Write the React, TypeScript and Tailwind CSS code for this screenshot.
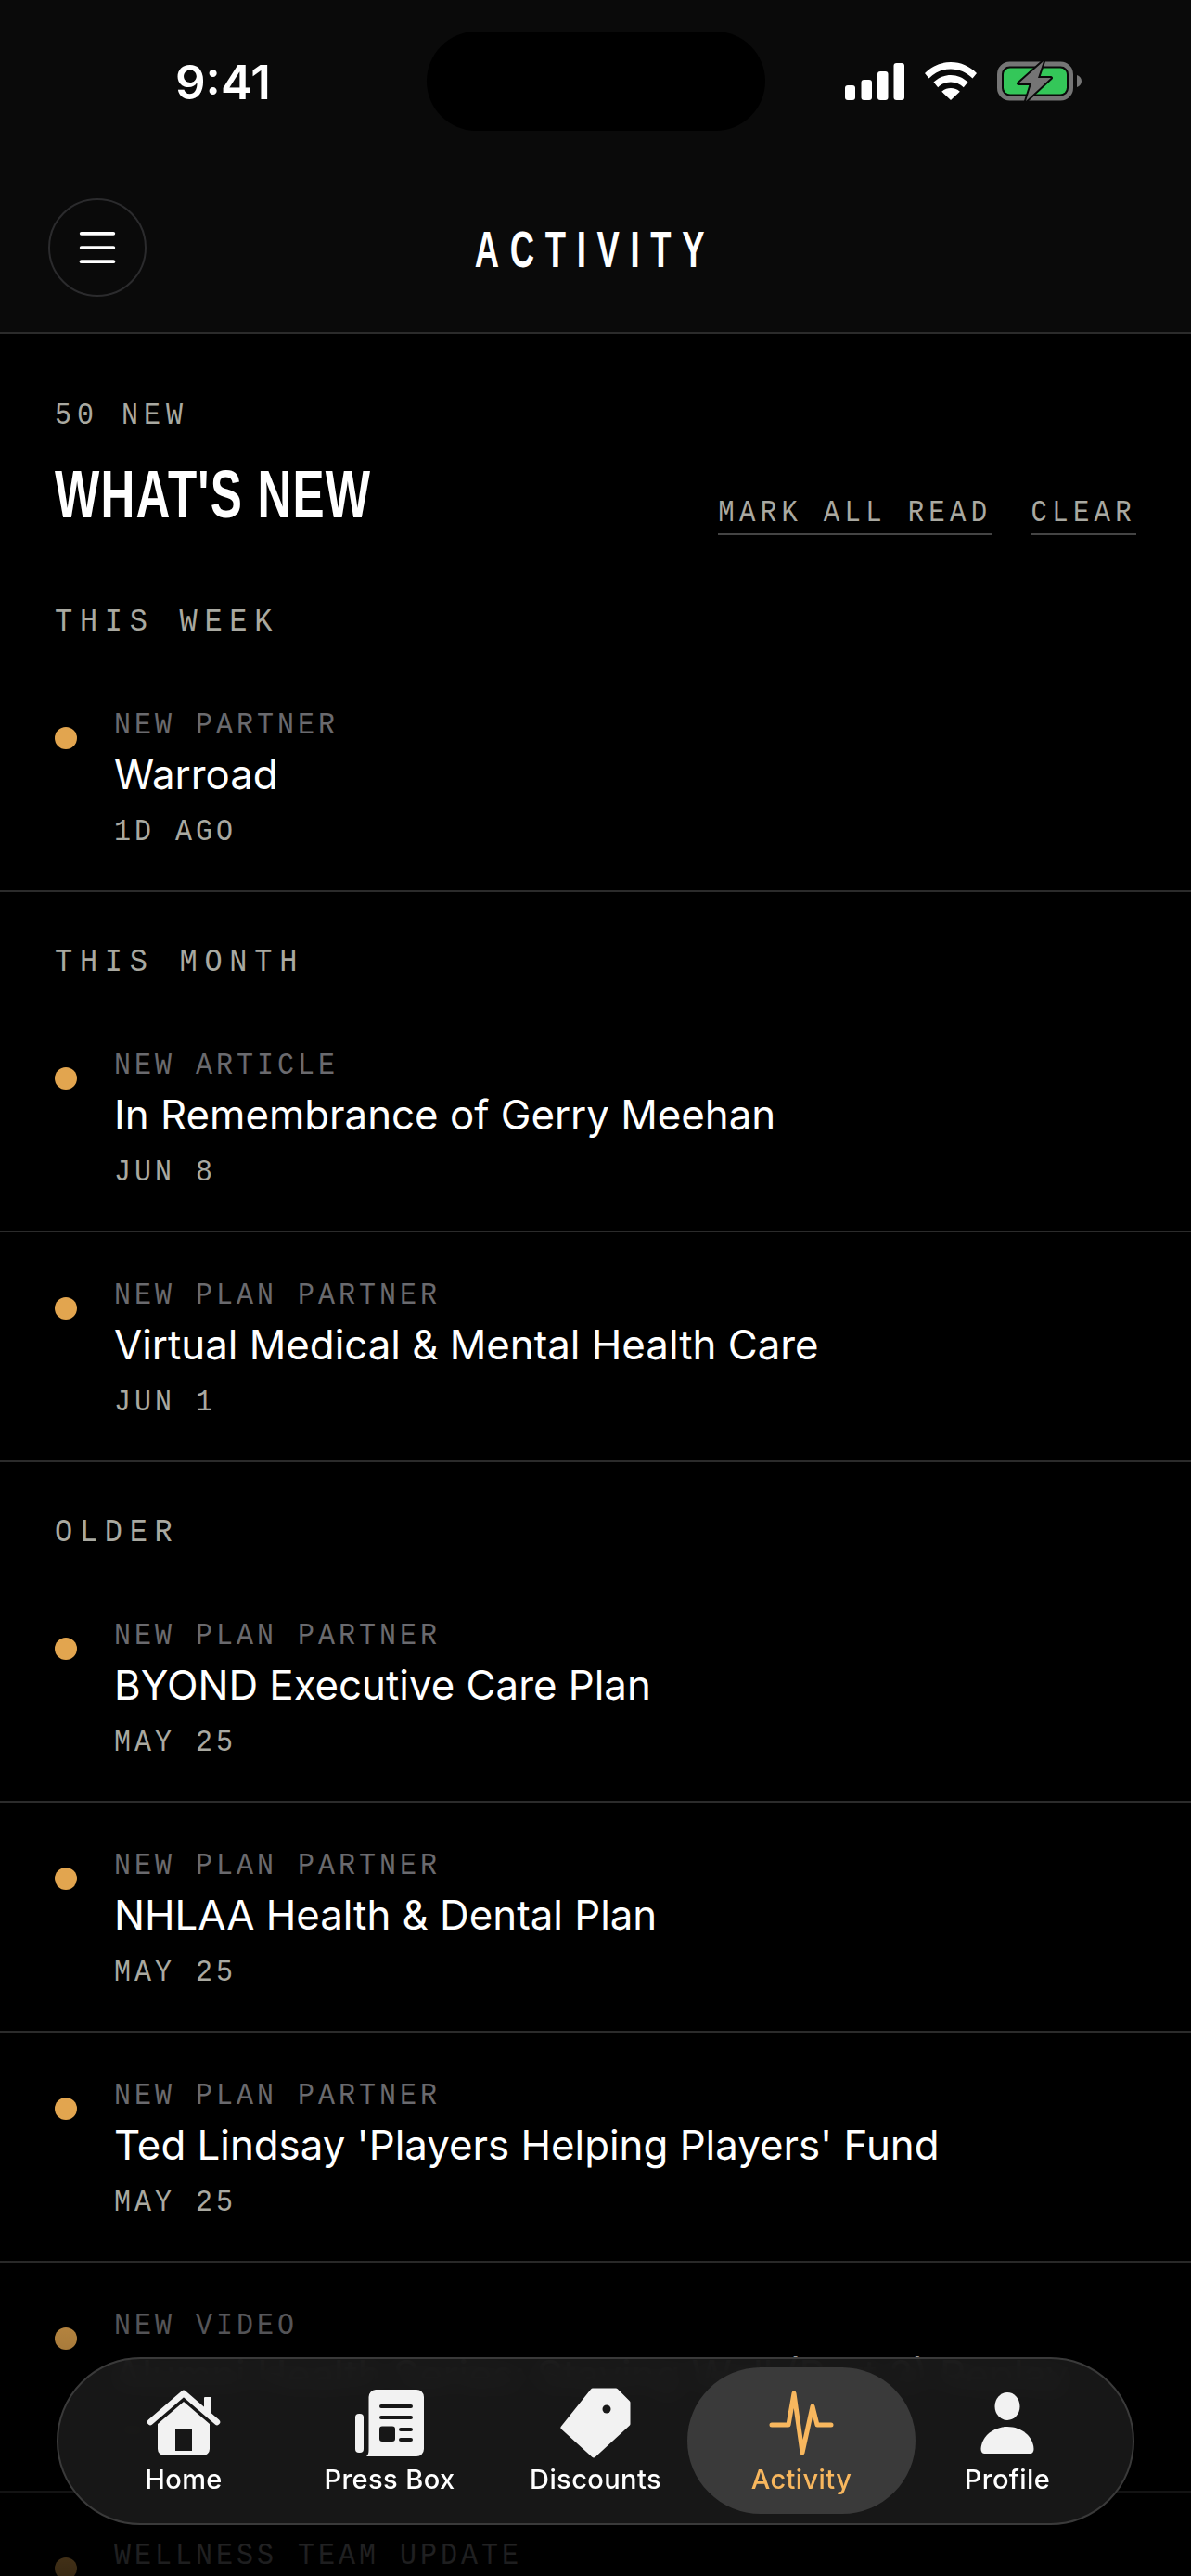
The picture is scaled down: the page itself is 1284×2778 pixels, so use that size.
import { Menu } from "lucide-react";

const mono = "font-['Liberation_Mono',monospace]";
const inter = "font-['Inter',sans-serif]";
const condensed = "font-['Liberation_Sans',sans-serif]";

type Item = { label: string; title?: string; meta?: string };

const sections: { name: string; items: Item[] }[] = [
  {
    name: "THIS WEEK",
    items: [{ label: "NEW PARTNER", title: "Warroad", meta: "1D AGO" }],
  },
  {
    name: "THIS MONTH",
    items: [
      { label: "NEW ARTICLE", title: "In Remembrance of Gerry Meehan", meta: "JUN 8" },
      { label: "NEW PLAN PARTNER", title: "Virtual Medical & Mental Health Care", meta: "JUN 1" },
    ],
  },
  {
    name: "OLDER",
    items: [
      { label: "NEW PLAN PARTNER", title: "BYOND Executive Care Plan", meta: "MAY 25" },
      { label: "NEW PLAN PARTNER", title: "NHLAA Health & Dental Plan", meta: "MAY 25" },
      { label: "NEW PLAN PARTNER", title: "Ted Lindsay 'Players Helping Players' Fund", meta: "MAY 25" },
      { label: "NEW VIDEO", title: "Alumni Health Series: Staying Well (Part 2) Replay", meta: "MAY 22" },
      { label: "WELLNESS TEAM UPDATE" },
    ],
  },
];

function StatusIcons() {
  return (
    <div className="flex items-center gap-[22px]">
      <svg width="64" height="40" viewBox="0 0 64 40" fill="#fff">
        <rect x="0" y="24" width="11" height="16" rx="3" />
        <rect x="17.5" y="18" width="11.5" height="22" rx="3" />
        <rect x="35" y="9" width="11.5" height="31" rx="3" />
        <rect x="52.5" y="0" width="11.5" height="40" rx="3" />
      </svg>
      <svg width="56" height="41" viewBox="0 0 56 41" fill="#fff">
        <path d="M28 0C17 0 7.5 4.5 0 12l4.5 5.5C11 11 19 7.5 28 7.5S45 11 51.5 17.5L56 12C48.500 4.500 39 0 28 0Z" />
        <path d="M28 14c-7 0-13.300 2.800-18.500 7.600l4.700 5.600C18 23.700 22.800 21.500 28 21.500s10 2.200 13.800 5.700l4.700-5.600C41.300 16.800 35 14 28 14Z" />
        <path d="M28 28c-3.800 0-7.200 1.300-9.800 3.700L28 41l9.800-9.300C35.200 29.300 31.800 28 28 28Z" />
      </svg>
      <svg width="91" height="43" viewBox="0 0 91 43">
        <rect x="2.500" y="3" width="77" height="37" rx="11" fill="none" stroke="#757575" strokeWidth="5" />
        <rect x="7" y="7.500" width="68" height="28" rx="7" fill="#34c759" />
        <path d="M86 15c3 1 5 3.500 5 6.500S89 27 86 28Z" fill="#757575" />
        <path d="M50 0 23 24h14l-6 19 27-25H44Z" fill="#757575" stroke="#0a0a0a" strokeWidth="4" strokeLinejoin="round" paintOrder="stroke" />
      </svg>
    </div>
  );
}

function HomeIcon() {
  return (
    <svg width="80" height="72" viewBox="0 0 80 72" fill="#f2f2f2">
      <rect x="62" y="8" width="8" height="18" rx="1" />
      <path d="M4 35 40 4l36 31" fill="none" stroke="#f2f2f2" strokeWidth="6.500" strokeLinecap="round" strokeLinejoin="round" />
      <path
        fillRule="evenodd"
        d="M40 13 68 37V64a7 7 0 0 1-7 7H19a7 7 0 0 1-7-7V37ZM31 43V66H49V43Z"
      />
    </svg>
  );
}

function PressIcon() {
  return (
    <svg width="74" height="72" viewBox="0 0 74 72" fill="#f2f2f2">
      <rect x="0" y="26" width="9" height="42" rx="4" />
      <path
        fillRule="evenodd"
        d="M22 0H66a8 8 0 0 1 8 8V64a8 8 0 0 1-8 8H12c2.500-1.500 2.500-5 2.500-8V8a8 8 0 0 1 7.500-8ZM28 16a2 2 0 0 0 0 4H60a2 2 0 0 0 0-4ZM28 28a2 2 0 0 0 0 4H60a2 2 0 0 0 0-4ZM29 39.500a3 3 0 0 0-3 3V53a3 3 0 0 0 3 3H40a3 3 0 0 0 3-3V42.500a3 3 0 0 0-3-3ZM49 41a2 2 0 0 0 0 4H60a2 2 0 0 0 0-4ZM49 52a2 2 0 0 0 0 4H60a2 2 0 0 0 0-4Z"
      />
    </svg>
  );
}

function TagIcon() {
  return (
    <svg width="76" height="76" viewBox="0 0 76 76" fill="#f2f2f2">
      <path
        stroke="#f2f2f2"
        strokeWidth="5"
        strokeLinejoin="round"
        d="M35 3H60L73 16V39L36 73 3 43Z"
      />
      <circle cx="50" cy="23" r="4.500" fill="#181818" />
    </svg>
  );
}

function PulseIcon() {
  return (
    <svg width="70" height="70" viewBox="0 0 70 70" fill="none">
      <path
        d="M3 37H21L27 3 36 67 47 17 52 37H67"
        stroke="#f8b75e"
        strokeWidth="5"
        strokeLinecap="round"
        strokeLinejoin="round"
      />
    </svg>
  );
}

function UserIcon() {
  return (
    <svg width="58" height="66" viewBox="0 0 58 66" fill="#f2f2f2">
      <ellipse cx="29" cy="15" rx="13.500" ry="15" />
      <path d="M29 37c-16 0-28 11-28.500 24 0 3 1.500 5 4 5H53.500c2.500 0 4-2 4-5C57 48 45 37 29 37Z" />
    </svg>
  );
}

const tabs = [
  { name: "Home", icon: <HomeIcon /> },
  { name: "Press Box", icon: <PressIcon /> },
  { name: "Discounts", icon: <TagIcon /> },
  { name: "Activity", icon: <PulseIcon />, active: true },
  { name: "Profile", icon: <UserIcon /> },
];

function Row({ item }: { item: Item }) {
  return (
    <div className="flex h-[248px] shrink-0 items-start gap-[40px] border-b-2 border-[#2b2b2b] pl-[59px] pt-[53px]">
      <span className="mt-[17px] h-6 w-6 shrink-0 rounded-full bg-[#e2a54f]" />
      <div>
        <p className={`${mono} scale-y-[1.12] text-[30px] leading-[30px] tracking-[4px] text-[#6a6a6e]`}>{item.label}</p>
        {item.title && (
          <p className={`${inter} mt-[13px] whitespace-nowrap text-[43.8px] leading-[52px] text-white`}>{item.title}</p>
        )}
        {item.meta && (
          <p className={`${mono} mt-[20px] scale-y-[1.12] text-[30px] leading-[30px] tracking-[4px] text-[#a9a9a1]`}>{item.meta}</p>
        )}
      </div>
    </div>
  );
}

export default function App() {
  return (
    <div className="relative h-[2778px] w-[1284px] overflow-hidden bg-black">
      {/* Header */}
      <header className="relative h-[360px] border-b-2 border-[#2b2b2b] bg-[#0a0a0a]">
        <div className="flex h-[176px] items-start justify-between pl-[189px] pr-[118px] pt-[66px]">
          <span className={`${inter} text-[51px] font-semibold leading-[46px] text-white`}>9:41</span>
          <StatusIcons />
        </div>
        <div className="absolute left-[460px] top-[34px] h-[107px] w-[365px] rounded-full bg-black" />
        <div className="flex items-center pl-[52px] pr-[158px] pt-[38px]">
          <button className="flex h-[106px] w-[106px] shrink-0 items-center justify-center rounded-full border-2 border-[#2b2b2d] text-white">
            <Menu size={52} strokeWidth={1.7} />
          </button>
          <h1 className="flex-1 pt-[4px] text-center">
            <span className={`${condensed} inline-block scale-x-[0.65] text-[56px] font-bold leading-[60px] tracking-[18px] text-white`}>
              ACTIVITY
            </span>
          </h1>
        </div>
      </header>

      {/* Content */}
      <main className="flex flex-col">
        <div className="flex items-end justify-between pl-[59px] pr-[59px] pt-[73px]">
          <div>
            <p className={`${mono} scale-y-[1.12] text-[30px] leading-[30px] tracking-[6px] text-[#a9a9a1]`}>50 NEW</p>
            <h2 className="mt-[40px] h-[60px] w-[340px]">
              <span className={`${condensed} inline-block origin-left scale-x-[0.71] whitespace-nowrap text-[72px] font-bold leading-[60px] tracking-[1.700px] text-white`}>
                WHAT'S NEW
              </span>
            </h2>
          </div>
          <div className="-mb-[14px] flex gap-[42px]">
            <span className="border-b-2 border-[#444] pb-[3px]">
              <span className={`${mono} inline-block scale-y-[1.12] text-[29px] leading-[37px] tracking-[5.300px] text-[#a9a9a1]`}>
                MARK ALL READ
              </span>
            </span>
            <span className="border-b-2 border-[#444] pb-[3px]">
              <span className={`${mono} inline-block scale-y-[1.12] text-[29px] leading-[37px] tracking-[5.300px] text-[#a9a9a1]`}>
                CLEAR
              </span>
            </span>
          </div>
        </div>
        {sections.map((section, i) => (
          <section key={section.name} className="flex flex-col">
            <h3 className={`${i === 0 ? "pt-[92px]" : "pt-[60px]"} pb-[27px] pl-[59px]`}>
              <span className={`${mono} inline-block scale-y-[1.12] text-[32px] leading-[32px] tracking-[7.700px] text-[#a9a9a1]`}>
                {section.name}
              </span>
            </h3>
            {section.items.map((item, j) => (
              <Row key={j} item={item} />
            ))}
          </section>
        ))}
      </main>

      {/* Fade under the tab bar */}
      <div className="pointer-events-none absolute inset-x-0 bottom-0 h-[370px] bg-gradient-to-b from-transparent to-black/75" />

      {/* Tab bar */}
      <nav className="absolute left-[61px] top-[2542px] grid h-[181px] w-[1162px] grid-cols-5 rounded-full border-2 border-[#3a3a3a] bg-[#181818]/95 px-[24px] backdrop-blur-md">
        {tabs.map((tab) => (
          <div
            key={tab.name}
            className={`relative flex flex-col items-center ${tab.active ? "text-[#f8b75e]" : "text-white"}`}
          >
            {tab.active && <span className="absolute -left-3 -right-3 top-[9px] h-[158px] rounded-[79px] bg-[#3a3a3a]" />}
            <div className="relative mt-[32px] flex h-[74px] items-center justify-center">{tab.icon}</div>
            <span className={`${inter} relative mt-[6px] text-[29px] font-medium leading-[36px] tracking-[0.4px]`}>{tab.name}</span>
          </div>
        ))}
      </nav>
    </div>
  );
}
